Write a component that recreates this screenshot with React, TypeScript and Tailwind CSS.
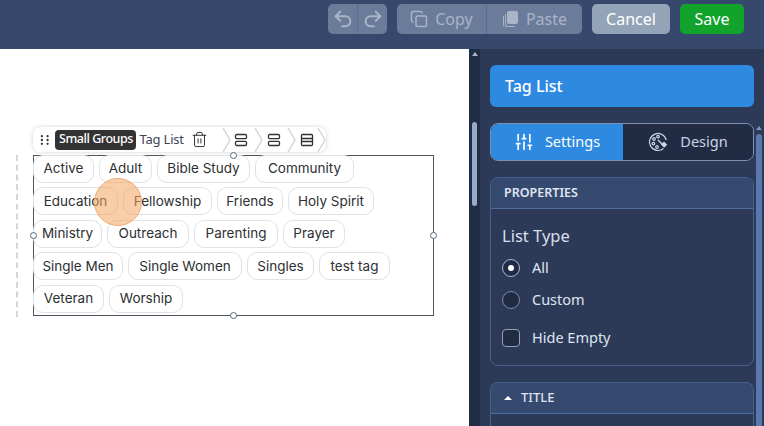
import { Undo2, Redo2, Copy, Trash2, SlidersVertical } from "lucide-react";

const rows = [
  [["Active", "w-[61px]"], ["Adult", "w-[53px]"], ["Bible Study", "w-[93px]"], ["Community", "w-[99px]"]],
  [["Education", "w-[85px]"], ["Fellowship", "w-[89px]"], ["Friends", "w-[66px]"], ["Holy Spirit", "w-[86px]"]],
  [["Ministry", "w-[69px]"], ["Outreach", "w-[82px]"], ["Parenting", "w-[84px]"], ["Prayer", "w-[62px]"]],
  [["Single Men", "w-[90px]"], ["Single Women", "w-[114px]"], ["Singles", "w-[67px]"], ["test tag", "w-[71px]"]],
  [["Veteran", "w-[71px]"], ["Worship", "w-[74px]"]],
];

function Handle({ className }: { className: string }) {
  return <div className={"absolute w-[7px] h-[7px] rounded-full bg-white border border-[#56657a] " + className} />;
}

function RowIcon({ three }: { three?: boolean }) {
  return (
    <svg width="14" height="14" viewBox="0 0 14 14" fill="none" stroke="#333" strokeWidth="1.3">
      {three ? (
        <>
          <rect x="1.5" y="1.5" width="11" height="11" rx="1" />
          <path d="M1.5 5.5h11M1.5 8.5h11" />
        </>
      ) : (
        <>
          <rect x="1.5" y="1.5" width="11" height="4.2" rx="1.2" />
          <rect x="1.5" y="8.3" width="11" height="4.2" rx="1.2" />
        </>
      )}
    </svg>
  );
}

function Chevron() {
  return (
    <svg width="9" height="26" viewBox="0 0 9 26" fill="none" stroke="#cfd3d9" strokeWidth="1.4" className="shrink-0">
      <path d="M1 1l7 12-7 12" />
    </svg>
  );
}

export default function App() {
  return (
    <div className="w-[764px] h-[426px] overflow-hidden flex flex-col bg-white font-['Noto_Sans',sans-serif]">
      <header className="h-[49px] shrink-0 bg-[#36486b] flex items-start justify-end gap-[10px] pt-[4px] pr-[20px]">
        <div className="flex h-[30px] rounded-[5px] bg-[#6b7c9b] text-[#a9b4c7]">
          <div className="w-[30px] flex items-center justify-center border-r border-[#5b6c8c]"><Undo2 size={22} strokeWidth={2.2} /></div>
          <div className="w-[29px] flex items-center justify-center"><Redo2 size={22} strokeWidth={2.2} /></div>
        </div>
        <div className="flex h-[30px] rounded-[5px] bg-[#6b7c9b] text-[#a9b4c7] text-[16px]">
          <div className="w-[90px] flex items-center justify-center gap-[7px] border-r border-[#5b6c8c]"><Copy size={18} />Copy</div>
          <div className="w-[95px] flex items-center justify-center gap-[7px]">
            <svg width="17" height="18" viewBox="0 0 17 18" fill="#a9b4c7"><rect x="5" y="1" width="11" height="13" rx="2" /><path d="M3 4v10a3 3 0 0 0 3 3h7v-1H6a2 2 0 0 1-2-2V4z M1 6v8a4 4 0 0 0 4 4h6H5a3 3 0 0 1-3-3V6z" /></svg>
            Paste
          </div>
        </div>
        <div className="w-[78px] h-[30px] rounded-[5px] bg-[#93a4b8] text-white text-[16px] flex items-center justify-center">Cancel</div>
        <div className="w-[64px] h-[30px] rounded-[5px] bg-[#11a32b] text-white text-[16px] flex items-center justify-center">Save</div>
      </header>

      <div className="flex-1 flex min-h-0">
        <main className="w-[469px] shrink-0 relative pl-[33px] pt-[106px]">
          <div className="absolute left-[16px] top-[106px] h-[162px] border-l-2 border-dashed border-[#d6d6d6]" />
          <div className="absolute left-[33px] top-[78px] h-[25px] w-[293px] flex items-center pl-[7px] rounded-[7px] bg-white shadow-[0_0_4px_rgba(0,0,0,0.18)] text-[#2a3342]">
            <svg width="10" height="12" viewBox="0 0 10 12" fill="#333"><circle cx="2" cy="2" r="1.2" /><circle cx="8" cy="2" r="1.2" /><circle cx="2" cy="6" r="1.2" /><circle cx="8" cy="6" r="1.2" /><circle cx="2" cy="10" r="1.2" /><circle cx="8" cy="10" r="1.2" /></svg>
            <span className="ml-[6px] h-[20px] w-[81px] shrink-0 rounded-[4px] bg-[#333] text-white text-[12.5px] font-medium tracking-[-0.45px] flex items-center justify-center">Small Groups</span>
            <span className="ml-[3px] text-[13px] text-[#3a4657] w-[47px] tracking-[-0.2px] whitespace-nowrap">Tag List</span>
            <Trash2 size={17} strokeWidth={1.4} className="ml-[7px] text-[#333] shrink-0" />
            <span className="ml-[14px]"><Chevron /></span>
            <span className="ml-[3px]"><RowIcon /></span>
            <span className="ml-[6px]"><Chevron /></span>
            <span className="ml-[4px]"><RowIcon /></span>
            <span className="ml-[6px]"><Chevron /></span>
            <span className="ml-[4px]"><RowIcon three /></span>
            <span className="ml-[3px]"><Chevron /></span>
          </div>

          <div className="relative w-[401px] h-[161px] border border-[#50565f]">
            <div className="flex flex-col gap-[4.4px] -mx-px -mt-px">
              {rows.map((r) => (
                <div key={r[0][0]} className="flex gap-[5px]">
                  {r.map(([t, w]) => (
                    <span key={t} className={"h-[28px] pb-[1px] rounded-[10px] border border-[#dfe1e4] bg-white flex items-center justify-center text-[13.5px] text-[#2d2f33] font-['Inter',sans-serif] whitespace-nowrap " + w}>{t}</span>
                  ))}
                </div>
              ))}
            </div>
            <Handle className="left-[196px] -top-[4px]" />
            <Handle className="left-[196px] -bottom-[4px]" />
            <Handle className="-left-[4px] top-[76px]" />
            <Handle className="-right-[4px] top-[76px]" />
          </div>
          <div className="absolute left-[94px] top-[129px] w-[48px] h-[48px] rounded-full bg-[#f4a460]/55 border-[1.5px] border-[#f2ab6f]" />
        </main>

        <aside className="flex-1 flex bg-[#2c3a58] min-w-0">
          <div className="w-[11px] shrink-0 bg-[#1f2d45] flex flex-col items-center pt-[3px]">
            <div className="w-0 h-0 border-x-[3px] border-x-transparent border-b-[4px] border-b-[#aab5cc]" />
            <div className="mt-[66px] w-[5px] h-[84px] rounded-full bg-[#9aa8cc]" />
          </div>
          <div className="flex-1 relative pt-[16px] pl-[10px] pr-[10px] text-[#dfe5ef]">
            <div className="h-[42px] rounded-[6px] bg-[#2e8ae0] text-white text-[16px] font-medium flex items-center pl-[15px]">Tag List</div>
            <div className="mt-[16px] h-[38px] rounded-[8px] border border-[#7f91b3] flex overflow-hidden text-[14.5px]">
              <div className="w-[132px] bg-[#2e8ae0] text-white flex items-center justify-center gap-[11px]"><SlidersVertical size={20} />Settings</div>
              <div className="flex-1 bg-[#212c44] text-[#c9d3e6] flex items-center justify-center gap-[12px]">
                <svg width="20" height="20" viewBox="0 0 20 20" fill="none" stroke="#c9d3e6" strokeWidth="1.2">
                  <path d="M15.5 16.5A8.5 8.5 0 1 1 18.3 8" />
                  <circle cx="6" cy="7" r="1.3" />
                  <circle cx="10" cy="4.6" r="1.3" />
                  <circle cx="5.4" cy="11.6" r="1.3" />
                  <circle cx="9" cy="15" r="1.3" />
                  <path d="M10 8l6.5 6.5" strokeWidth="1.4" />
                  <path d="M13 12.5l3-3 3.2 3.2-3 3z" fill="#c9d3e6" stroke="none" />
                </svg>
                Design
              </div>
            </div>
            <section className="mt-[16px] h-[189px] rounded-[8px] border border-[#47608f] overflow-hidden">
              <div className="h-[31px] bg-[#36496f] border-b border-[#4f6c9e] text-[12.5px] font-semibold text-[#dfe5ef] flex items-center pl-[13px]">PROPERTIES</div>
              <div className="pl-[11px] pt-[15px]">
                <div className="text-[16.5px] leading-[24px] text-[#d8dfeb]">List Type</div>
                <div className="mt-[4px] flex items-center gap-[12px] h-[32px] text-[14.5px]">
                  <span className="w-[18px] h-[18px] rounded-full border border-[#aeb9cd] bg-[#212c44] flex items-center justify-center"><span className="w-[6px] h-[6px] rounded-full bg-white" /></span>
                  All
                </div>
                <div className="flex items-center gap-[12px] h-[32px] text-[14.5px]">
                  <span className="w-[18px] h-[18px] rounded-full border border-[#7f8da8] bg-[#212c44]" />
                  Custom
                </div>
                <div className="mt-[6px] flex items-center gap-[12px] h-[32px] text-[14.5px]">
                  <span className="w-[18px] h-[18px] rounded-[4px] border border-[#93a2bb] bg-[#212c44]" />
                  Hide Empty
                </div>
              </div>
            </section>
            <section className="mt-[16px] rounded-t-[8px] border border-b-0 border-[#47608f] overflow-hidden h-[60px]">
              <div className="h-[31px] bg-[#36496f] border-b border-[#4f6c9e] text-[13px] font-medium flex items-center pl-[13px] gap-[9px]">
                <span className="w-0 h-0 border-x-[4px] border-x-transparent border-b-[4px] border-b-white" />
                TITLE
              </div>
            </section>
            <div className="absolute right-[2px] top-[77px] bottom-0 w-[6px] flex flex-col items-center">
              <div className="w-0 h-0 border-x-[3px] border-x-transparent border-b-[4px] border-b-[#7f93b8]" />
              <div className="mt-[4px] flex-1 w-full rounded-t-full bg-[#5a78ad]" />
            </div>
          </div>
        </aside>
      </div>
    </div>
  );
}
